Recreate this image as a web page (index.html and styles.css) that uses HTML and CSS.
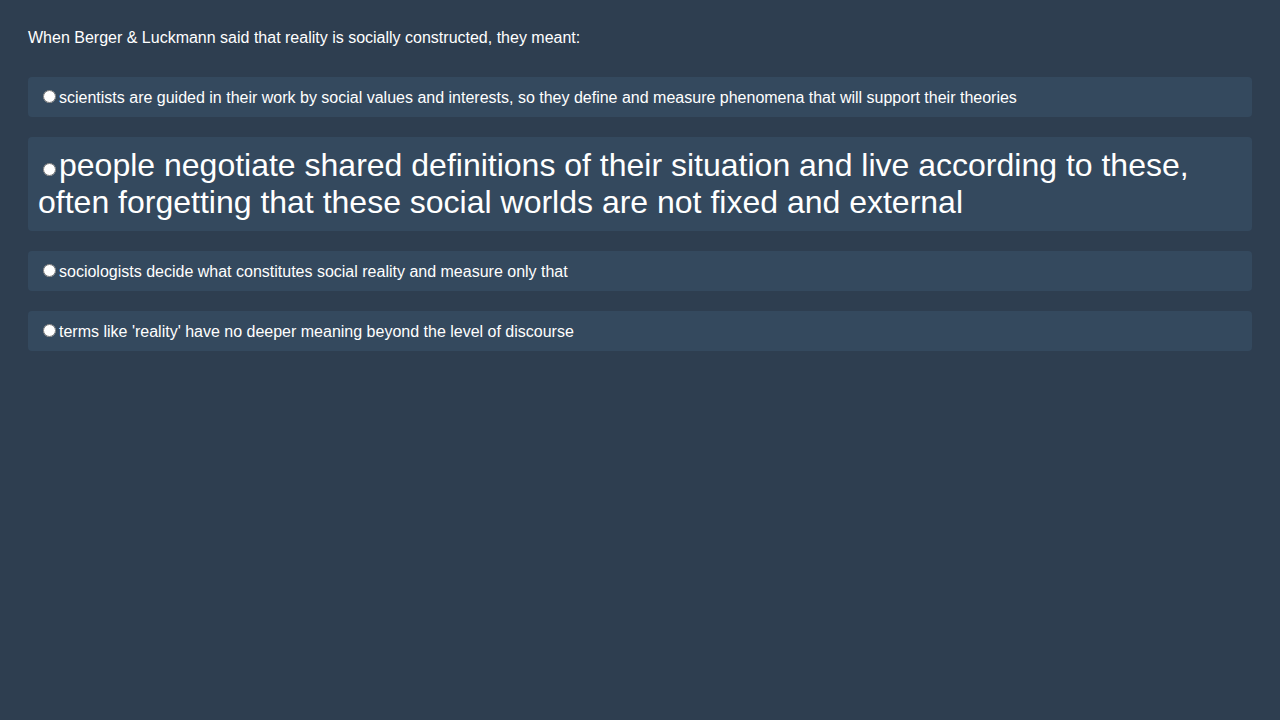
FILE: index.html
```html
<!DOCTYPE html>
<html lang="en">
<head>
<meta charset="utf-8">
<title>Quiz</title>
<link rel="stylesheet" href="styles.css">
</head>
<body>
<div class="quiz">
  <p class="question">When Berger &amp; Luckmann said that reality is socially constructed, they meant:</p>
  <div class="options">
    <label class="option"><input type="radio" name="q">scientists are guided in their work by social values and interests, so they define and measure phenomena that will support their theories</label>
    <label class="option option-large"><input type="radio" name="q">people negotiate shared definitions of their situation and live according to these, often forgetting that these social worlds are not fixed and external</label>
    <label class="option"><input type="radio" name="q">sociologists decide what constitutes social reality and measure only that</label>
    <label class="option"><input type="radio" name="q">terms like 'reality' have no deeper meaning beyond the level of discourse</label>
  </div>
</div>
</body>
</html>
```
FILE: styles.css
```css
html, body {
  margin: 0;
  padding: 0;
  background: #2e3e50;
}
body {
  font-family: "Liberation Sans", Arial, sans-serif;
  color: #ffffff;
  font-size: 16px;
}
.quiz {
  padding: 29px 28px 28px;
}
.question {
  margin: 0 0 30px 0;
  line-height: 18px;
}
.options {
  display: flex;
  flex-direction: column;
  gap: 20px;
}
.option {
  display: block;
  background: #34495e;
  border-radius: 4px;
  padding: 10px;
}
.option-large {
  font-size: 32px;
}
.option input {
  margin: 3px 3px 0 5px;
}
```
